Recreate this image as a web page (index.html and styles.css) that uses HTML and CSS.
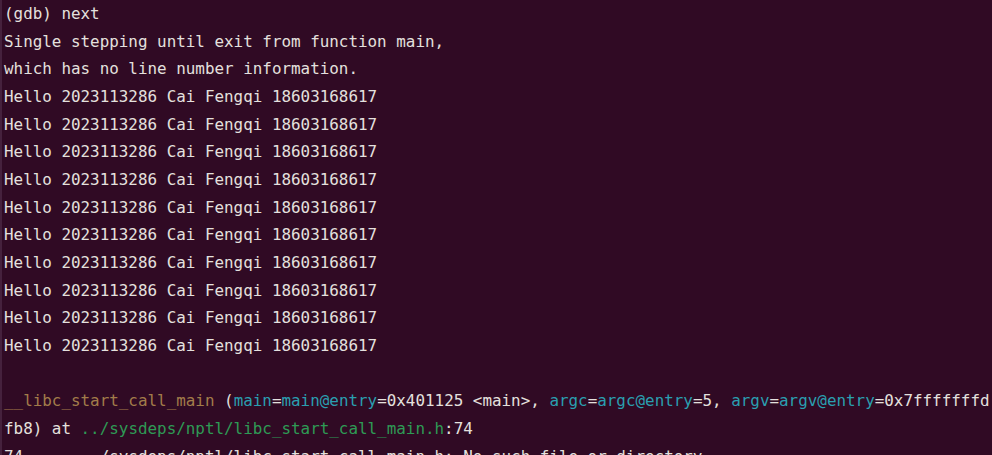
FILE: index.html
```html
<!DOCTYPE html>
<html>
<head>
<meta charset="utf-8">
<link rel="stylesheet" href="styles.css">
</head>
<body>
<div class="term">
<pre class="out">(gdb) next
Single stepping until exit from function main,
which has no line number information.
Hello 2023113286 Cai Fengqi 18603168617
Hello 2023113286 Cai Fengqi 18603168617
Hello 2023113286 Cai Fengqi 18603168617
Hello 2023113286 Cai Fengqi 18603168617
Hello 2023113286 Cai Fengqi 18603168617
Hello 2023113286 Cai Fengqi 18603168617
Hello 2023113286 Cai Fengqi 18603168617
Hello 2023113286 Cai Fengqi 18603168617
Hello 2023113286 Cai Fengqi 18603168617
Hello 2023113286 Cai Fengqi 18603168617

<span class="fn">__libc_start_call_main</span> (<span class="arg">main</span>=<span class="arg">main@entry</span>=0x401125 &lt;main&gt;, <span class="arg">argc</span>=<span class="arg">argc@entry</span>=5, <span class="arg">argv</span>=<span class="arg">argv@entry</span>=0x7fffffffd
fb8) at <span class="file">../sysdeps/nptl/libc_start_call_main.h</span>:74
74	../sysdeps/nptl/libc_start_call_main.h: No such file or directory.</pre>
</div>
</body>
</html>
```

FILE: styles.css
```css
html, body {
  margin: 0;
  padding: 0;
  background: #300a24;
  height: 100%;
  overflow: hidden;
}
.term {
  border-left: 2px solid #45213d;
  height: 100%;
  box-sizing: border-box;
  padding-left: 2px;
}
.out {
  margin: 0;
  font-family: "DejaVu Sans Mono", monospace;
  font-size: 15.9px;
  line-height: 27.67px;
  color: #e4e0de;
  white-space: pre;
  tab-size: 8;
}
.fn { color: #a27c4a; }
.arg { color: #2a9fb0; }
.file { color: #2e9a55; }
```
